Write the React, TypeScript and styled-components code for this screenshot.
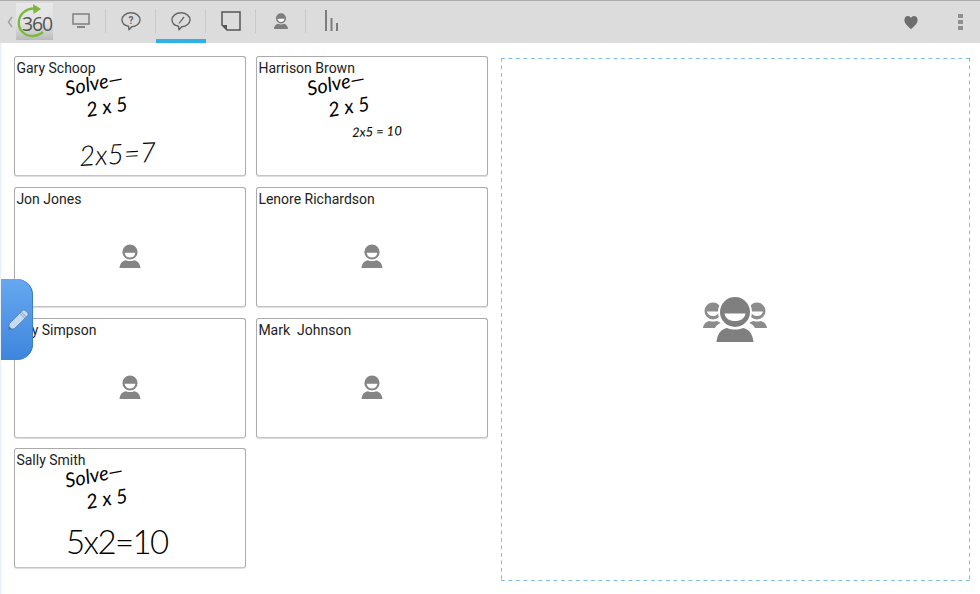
import React from 'react';
import styled, { createGlobalStyle } from 'styled-components';

const GlobalStyle = createGlobalStyle`
  html, body {
    margin: 0;
    padding: 0;
    background: #fff;
    font-family: Roboto, "Liberation Sans", sans-serif;
  }
`;

const Page = styled.div`
  position: relative;
  width: 980px;
  height: 594px;
  overflow: hidden;
  background: #fff;
`;

const Toolbar = styled.header`
  height: 43px;
  box-sizing: border-box;
  display: flex;
  align-items: stretch;
  background: #dcdcdc;
  border-top: 1px solid #ababab;
  box-shadow: 0 1px 1px #d8d8d8;
`;

const BackChevron = styled.div`
  width: 16px;
  display: flex;
  align-items: center;
  justify-content: center;
  padding-left: 4px;
  box-sizing: border-box;
`;

const Logo = styled.div`
  position: relative;
  width: 37px;
  height: 37px;
  margin-top: 2px;
  margin-right: 3px;
  background: linear-gradient(#e8e8e8 0%, #e2e2e2 55%, #b9bbbb 100%);
  display: flex;
  align-items: center;
  justify-content: center;
`;

const LogoText = styled.span`
  position: relative;
  font-family: "Open Sans", sans-serif;
  font-size: 19.5px;
  letter-spacing: -1.2px;
  color: #555;
  margin: 3px 0 0 5px;
`;

const LogoArc = styled.svg`
  position: absolute;
  left: 0;
  top: 0;
`;

const Tab = styled.div<{ $active?: boolean; $last?: boolean }>`
  width: 50px;
  height: 42px;
  box-sizing: border-box;
  display: flex;
  align-items: center;
  justify-content: center;
  padding-top: 1px;
  position: relative;
  border-bottom: 4px solid ${(p) => (p.$active ? '#2eb1e4' : 'transparent')};
  &::after {
    content: '';
    display: ${(p) => (p.$last ? 'none' : 'block')};
    position: absolute;
    right: 0;
    top: 8px;
    height: 24px;
    width: 1px;
    background: #cacaca;
  }
`;

const Spacer = styled.div`
  flex: 1;
`;

const RightAction = styled.div<{ $width: number }>`
  width: ${(p) => p.$width}px;
  display: flex;
  align-items: center;
  justify-content: center;
`;

const Workspace = styled.main`
  height: 551px;
  box-sizing: border-box;
  display: flex;
  gap: 13px;
  padding: 13px 10px 0 14px;
  background: linear-gradient(90deg, #e8f1fa 0, #e8f1fa 1px, #fff 2px);
`;

const CardGrid = styled.section`
  display: grid;
  grid-template-columns: 232px 232px;
  grid-auto-rows: 120px;
  column-gap: 10px;
  row-gap: 10.8px;
  align-content: start;
`;

const Card = styled.article`
  position: relative;
  box-sizing: border-box;
  background: #fff;
  border: 1px solid #ababab;
  border-bottom-color: #c4c4c4;
  border-radius: 3px;
  box-shadow: 0 1px 1px #dcdcdc;
  display: flex;
  flex-direction: column;
  overflow: hidden;
`;

const StudentName = styled.div`
  font-size: 14px;
  line-height: 16px;
  color: #222;
  padding: 3px 0 0 1.4px;
  white-space: pre;
`;

const EmptyBody = styled.div`
  flex: 1;
  display: flex;
  align-items: center;
  justify-content: center;
`;

const Ink = styled.span<{ $x: number; $y: number; $size: number; $rot?: number; $upright?: boolean }>`
  position: absolute;
  left: ${(p) => p.$x}px;
  top: ${(p) => p.$y}px;
  font-family: "Lato", "DejaVu Sans", sans-serif;
  font-style: ${(p) => (p.$upright ? 'normal' : 'italic')};
  font-weight: ${(p) => (p.$size > 24 ? 300 : 400)};
  font-size: ${(p) => p.$size}px;
  letter-spacing: ${(p) => (p.$upright ? '-1.6px' : '0')};
  line-height: 1;
  color: #000;
  white-space: pre;
  transform: rotate(${(p) => p.$rot ?? 0}deg);
  transform-origin: left center;
`;

const DASH = '#7cbde4';

const DropZone = styled.section`
  width: 469px;
  height: 523px;
  margin-top: 2px;
  box-sizing: border-box;
  background-image:
    linear-gradient(90deg, ${DASH} 4px, transparent 4px),
    linear-gradient(90deg, ${DASH} 4px, transparent 4px),
    linear-gradient(${DASH} 4px, transparent 4px),
    linear-gradient(${DASH} 4px, transparent 4px);
  background-size: 7.5px 1px, 7.5px 1px, 1px 7.5px, 1px 7.5px;
  background-position: 0 0, 0 100%, 0 0, 100% 0;
  background-repeat: repeat-x, repeat-x, repeat-y, repeat-y;
  display: flex;
  align-items: center;
  justify-content: center;
  padding-right: 2px;
`;

const PenTab = styled.button`
  position: absolute;
  left: 1px;
  top: 279px;
  width: 32px;
  height: 81px;
  padding: 0 0 0 1px;
  border: none;
  border-radius: 0 16px 16px 0;
  background: linear-gradient(#66a8f0, #3e85dc);
  box-shadow: inset -1px 0 0 #3d7dc9;
  display: flex;
  align-items: center;
  justify-content: center;
`;

const GREY = '#666';

const Monitor = () => (
  <svg width="20" height="16" viewBox="0 0 20 16">
    <rect x="2" y="1" width="16" height="10" fill="none" stroke="#858585" strokeWidth="1.6" />
    <rect x="6" y="13" width="8" height="2" fill="#858585" />
  </svg>
);

const Bubble = ({ children }: { children: React.ReactNode }) => (
  <svg width="20" height="20" viewBox="0 0 20 20">
    <path d="M7.6 15.2C3.8 14.6 1 12.2 1 8.800 1 4.900 5 1.800 10 1.800s9 3.100 9 7c0 3.700-3.600 6.700-8.200 7L8 18.800z" fill="none" stroke={GREY} strokeWidth="1.4" strokeLinejoin="round" />
    {children}
  </svg>
);

const NoteIcon = () => (
  <svg width="20" height="20" viewBox="0 0 20 20">
    <path d="M1 1h18v18H6L1 14z" fill="none" stroke="#555" strokeWidth="1.5" />
    <path d="M1.500 14H6v5z" fill="#555" />
  </svg>
);

const Person = ({ size, color = '#7d7d7d' }: { size: number; color?: string }) => (
  <svg width={size} height={size} viewBox="0 0 24 24">
    <circle cx="12" cy="8" r="7.600" fill={color} />
    <path d="M6.600 8.800h10.800c-.4 3-2.600 4.800-5.400 4.800S7 11.800 6.600 8.800z" fill="#fff" />
    <path d="M8 16.200c2.400 1.200 5.600 1.200 8 0 3 .6 6 2.400 6.500 7.800H1.500C2 18.600 5 16.800 8 16.200z" fill={color} />
  </svg>
);

const BarsIcon = () => (
  <svg width="13" height="21" viewBox="0 0 13 21">
    <rect x="0" y="0" width="2" height="21" fill="#7d7d7d" />
    <rect x="5.500" y="8" width="2" height="13" fill="#7d7d7d" />
    <rect x="11" y="13" width="2" height="8" fill="#7d7d7d" />
  </svg>
);

const Heart = () => (
  <svg width="14" height="15" viewBox="0 0 14 14">
    <path d="M7 13.800C4.500 11 .4 8.200.4 4.400.4 2 2.100.6 3.900.6 5.300.6 6.400 1.400 7 2.600 7.600 1.400 8.700.6 10.100.6c1.800 0 3.500 1.400 3.500 3.800 0 3.800-4.100 6.600-6.600 9.400z" fill="#6e6e6e" />
  </svg>
);

const Dots = () => (
  <svg width="5" height="16" viewBox="0 0 5 16">
    <rect y="0" width="5" height="4" fill="#8f8f8f" />
    <rect y="6" width="5" height="4" fill="#8f8f8f" />
    <rect y="12" width="5" height="4" fill="#8f8f8f" />
  </svg>
);

const Pencil = () => (
  <svg width="22" height="22" viewBox="0 0 22 22">
    <path d="M15.500 1.500c1-.8 2.200-.6 3 .2l2 2c.8.8.9 2 .1 3L7.500 19.500 1 21l1.500-6.500z" fill="#c6daf3" stroke="#4a76a8" strokeWidth="0.7" strokeLinejoin="round" />
    <path d="M12.800 4.200l5 5M14.300 2.900l5 5" stroke="#6d93bf" strokeWidth="0.9" />
    <path d="M1 21l1-4 3 3z" fill="#4a76a8" />
  </svg>
);

const GroupIcon = () => (
  <svg width="66" height="46" viewBox="0 0 66 46">
    <g fill="#8c8c8c">
      <circle cx="11" cy="14" r="8.500" />
      <path d="M1 31c.5-4.500 3.500-6.500 6.500-7 2.200.8 4.800.8 7 0 1.500.3 2.900.9 4 2-2.800 1.300-4.500 3-5.500 5z" />
      <circle cx="55" cy="14" r="8.500" />
      <path d="M65 31c-.5-4.500-3.500-6.500-6.500-7-2.200.8-4.800.8-7 0-1.500.3-2.900.9-4 2 2.800 1.300 4.500 3 5.500 5z" />
    </g>
    <g fill="#fff">
      <path d="M5 14.500h12c-.5 3-3 4.500-6 4.500s-5.500-1.500-6-4.500zM49 14.500h12c-.5 3-3 4.500-6 4.500s-5.500-1.500-6-4.500z" />
      <circle cx="33" cy="15" r="17" />
    </g>
    <circle cx="33" cy="15" r="15" fill="#7f7f7f" />
    <path d="M22.500 16.500h21c-.8 5-5 7.500-10.500 7.500s-9.700-2.500-10.500-7.500z" fill="#fff" />
    <path d="M25 31c5 2 11 2 16 0 5.500 1.200 9.500 5 10.500 14h-37C15.500 36 19.500 32.200 25 31z" fill="#7f7f7f" />
  </svg>
);

type InkMark = { text: string; x: number; y: number; size: number; rot?: number; upright?: boolean };

const solve: InkMark[] = [
  { text: 'Solve—', x: 50, y: 21, size: 20, rot: -11 },
  { text: '2 x 5', x: 71, y: 42, size: 20, rot: -9 },
];

const students: { name: string; ink?: InkMark[] }[] = [
  { name: 'Gary Schoop', ink: [...solve, { text: '2x5=7', x: 64, y: 84, size: 28, rot: -3 }] },
  { name: 'Harrison Brown', ink: [...solve, { text: '2x5 = 10', x: 95, y: 69, size: 13, rot: -2 }] },
  { name: 'Jon Jones' },
  { name: 'Lenore Richardson' },
  { name: 'Jay Simpson' },
  { name: 'Mark  Johnson' },
  { name: 'Sally Smith', ink: [...solve, { text: '5x2=10', x: 51, y: 76, size: 33, upright: true }] },
];

const App: React.FC = () => {
  return (
    <Page>
      <GlobalStyle />
      <Toolbar>
        <BackChevron>
          <svg width="6" height="12" viewBox="0 0 6 12">
            <path d="M5 1L1.500 6 5 11" fill="none" stroke="#a5a5a5" strokeWidth="1.600" />
          </svg>
        </BackChevron>
        <Logo>
          <LogoArc width="37" height="37" viewBox="0 0 37 37">
            <path d="M19 5.500C10.500 5 3 11 2.800 19.500 2.600 27.500 9 33 16 33c4 0 8-1.500 11-4" fill="none" stroke="#7cb83c" strokeWidth="2.400" />
            <path d="M17 1l8 5-7.500 5z" fill="#7cb83c" />
          </LogoArc>
          <LogoText>360</LogoText>
        </Logo>
        <Tab><Monitor /></Tab>
        <Tab>
          <Bubble>
            <text x="10" y="12.500" fontSize="10" fontWeight="700" textAnchor="middle" fill={GREY} fontFamily="Roboto, sans-serif">?</text>
          </Bubble>
        </Tab>
        <Tab $active>
          <Bubble>
            <path d="M12.500 5.500L8 11.500l-.500 1.500 1.400-.7 4.600-5.800z" fill={GREY} />
          </Bubble>
        </Tab>
        <Tab><NoteIcon /></Tab>
        <Tab><Person size={16} /></Tab>
        <Tab $last><BarsIcon /></Tab>
        <Spacer />
        <RightAction $width={58}><Heart /></RightAction>
        <RightAction $width={40}><Dots /></RightAction>
      </Toolbar>
      <Workspace>
        <CardGrid>
          {students.map((s) => (
            <Card key={s.name}>
              <StudentName>{s.name}</StudentName>
              {s.ink ? (
                s.ink.map((m) => (
                  <Ink key={m.text} $x={m.x} $y={m.y} $size={m.size} $rot={m.rot} $upright={m.upright}>{m.text}</Ink>
                ))
              ) : (
                <EmptyBody><Person size={24} color="#858585" /></EmptyBody>
              )}
            </Card>
          ))}
        </CardGrid>
        <DropZone><GroupIcon /></DropZone>
      </Workspace>
      <PenTab aria-label="Pen"><Pencil /></PenTab>
    </Page>
  );
};

export default App;
